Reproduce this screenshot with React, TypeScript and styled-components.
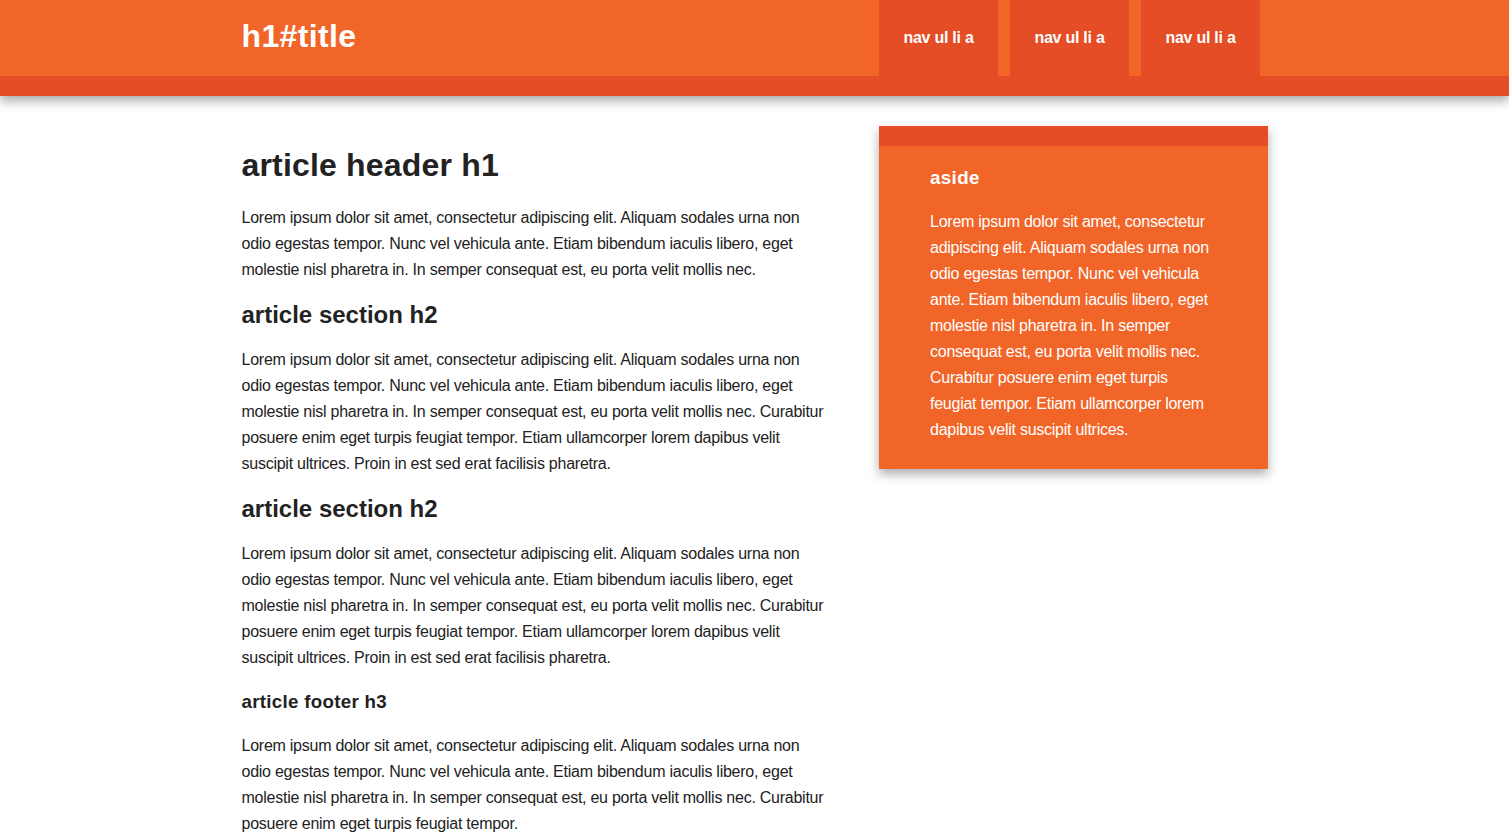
import React from "react";
import styled, { createGlobalStyle } from "styled-components";

const GlobalStyle = createGlobalStyle`
  html, body { margin: 0; padding: 0; }
  body {
    background: #ffffff;
    color: #222222;
    font-family: "Liberation Sans", Arial, Helvetica, sans-serif;
    font-size: 16px;
    line-height: 26px;
    letter-spacing: -0.25px;
  }
  * { box-sizing: border-box; }
`;

const HeaderContainer = styled.div`
  background: #f16529;
  border-bottom: 20px solid #e44d26;
  box-shadow: 0 5px 10px #aaa;
`;

const Wrapper = styled.div`
  width: 1026px;
  margin: 0 auto;
`;

const HeaderBar = styled(Wrapper).attrs({ as: "header" })`
  display: flex;
  justify-content: space-between;
  align-items: flex-start;
  height: 76px;
`;

const Title = styled.h1`
  margin: 23px 0 0;
  font-size: 32px;
  line-height: 26px;
  font-weight: bold;
  letter-spacing: 0.35px;
  color: #ffffff;
`;

const NavList = styled.ul`
  display: flex;
  gap: 12px;
  margin: 0 7.5px 0 0;
  padding: 0;
  list-style: none;
`;

const NavLink = styled.a`
  display: block;
  width: 119px;
  padding: 25px 0;
  text-align: center;
  font-weight: bold;
  color: #ffffff;
  background: #e44d26;
  text-decoration: none;
  line-height: 26px;
  letter-spacing: -0.25px;
`;

const Main = styled(Wrapper)`
  display: flex;
  justify-content: space-between;
  align-items: flex-start;
  padding: 30px 0;
`;

const Article = styled.article`
  width: 585px;
`;

const ArticleTitle = styled.h1`
  margin: 21.44px 0;
  font-size: 32px;
  line-height: 36px;
  font-weight: bold;
  letter-spacing: 0.18px;
`;

const SectionTitle = styled.h2`
  margin: 19.92px 0;
  font-size: 24px;
  line-height: 24px;
  font-weight: bold;
  letter-spacing: 0;
`;

const FooterTitle = styled.h3`
  margin: 18.72px 0;
  font-size: 18.72px;
  line-height: 25px;
  font-weight: bold;
  letter-spacing: 0.3px;
`;

const Paragraph = styled.p`
  margin: 16px 0;
`;

const Aside = styled.aside`
  width: 389px;
  margin-right: -0.5px;
  padding: 0 51px 10px;
  background: #f16529;
  border-top: 20px solid #e44d26;
  box-shadow: 0 5px 10px #aaa;
  color: #ffffff;
`;

const AsideTitle = styled.h3`
  margin: 18.72px 0;
  font-size: 18.72px;
  line-height: 26px;
  font-weight: bold;
  letter-spacing: 0.4px;
  color: #ffffff;
`;

const FooterContainer = styled.div`
  background: #f16529;
  border-top: 20px solid #e44d26;
`;

const Footer = styled(Wrapper).attrs({ as: "footer" })`
  padding: 20px 0;
  color: #ffffff;
`;

const FooterHeading = styled.h3`
  margin: 18.72px 0;
  font-size: 18.72px;
  line-height: 26px;
`;

const short =
  "Lorem ipsum dolor sit amet, consectetur adipiscing elit. Aliquam sodales urna non odio egestas tempor. Nunc vel vehicula ante. Etiam bibendum iaculis libero, eget molestie nisl pharetra in. In semper consequat est, eu porta velit mollis nec.";
const long =
  "Lorem ipsum dolor sit amet, consectetur adipiscing elit. Aliquam sodales urna non odio egestas tempor. Nunc vel vehicula ante. Etiam bibendum iaculis libero, eget molestie nisl pharetra in. In semper consequat est, eu porta velit mollis nec. Curabitur posuere enim eget turpis feugiat tempor. Etiam ullamcorper lorem dapibus velit suscipit ultrices. Proin in est sed erat facilisis pharetra.";
const footerText =
  "Lorem ipsum dolor sit amet, consectetur adipiscing elit. Aliquam sodales urna non odio egestas tempor. Nunc vel vehicula ante. Etiam bibendum iaculis libero, eget molestie nisl pharetra in. In semper consequat est, eu porta velit mollis nec. Curabitur posuere enim eget turpis feugiat tempor.";
const asideText =
  "Lorem ipsum dolor sit amet, consectetur adipiscing elit. Aliquam sodales urna non odio egestas tempor. Nunc vel vehicula ante. Etiam bibendum iaculis libero, eget molestie nisl pharetra in. In semper consequat est, eu porta velit mollis nec. Curabitur posuere enim eget turpis feugiat tempor. Etiam ullamcorper lorem dapibus velit suscipit ultrices.";

export default function App() {
  return (
    <>
      <GlobalStyle />
      <HeaderContainer>
        <HeaderBar>
          <Title>h1#title</Title>
          <nav>
            <NavList>
              {[0, 1, 2].map((i) => (
                <li key={i}>
                  <NavLink href="#">nav ul li a</NavLink>
                </li>
              ))}
            </NavList>
          </nav>
        </HeaderBar>
      </HeaderContainer>
      <Main>
        <Article>
          <header>
            <ArticleTitle>article header h1</ArticleTitle>
            <Paragraph>{short}</Paragraph>
          </header>
          <section>
            <SectionTitle>article section h2</SectionTitle>
            <Paragraph>{long}</Paragraph>
          </section>
          <section>
            <SectionTitle>article section h2</SectionTitle>
            <Paragraph>{long}</Paragraph>
          </section>
          <footer>
            <FooterTitle>article footer h3</FooterTitle>
            <Paragraph>{footerText}</Paragraph>
          </footer>
        </Article>
        <Aside>
          <AsideTitle>aside</AsideTitle>
          <Paragraph>{asideText}</Paragraph>
        </Aside>
      </Main>
      <FooterContainer>
        <Footer>
          <FooterHeading>footer</FooterHeading>
        </Footer>
      </FooterContainer>
    </>
  );
}
